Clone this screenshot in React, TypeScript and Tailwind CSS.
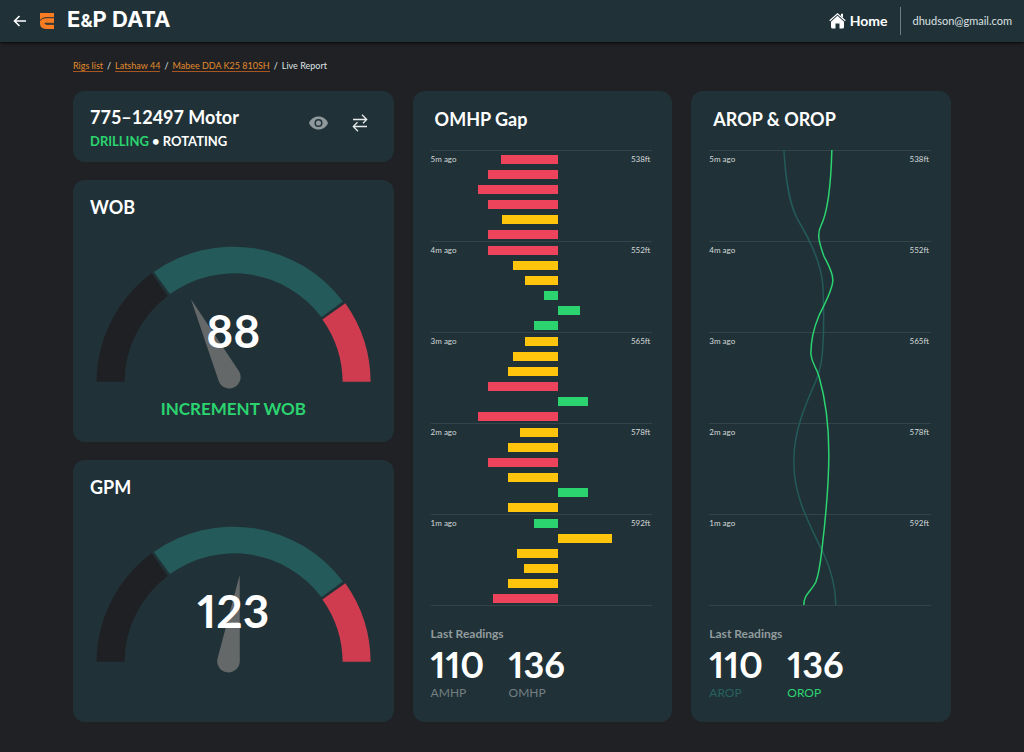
import React from "react";

type Needle = { x: number; y: number; angle: number };

const crumbs = ["Rigs list", "Latshaw 44", "Mabee DDA K25 810SH"];

// negative values grow to the left of the axis
const gapRows = [
  { time: "5m ago", depth: "538ft", values: [-58, -71, -81, -71, -57, -71] },
  { time: "4m ago", depth: "552ft", values: [-71, -45, -33, -14, 22, -24] },
  { time: "3m ago", depth: "565ft", values: [-33, -45, -51, -71, 30, -81] },
  { time: "2m ago", depth: "578ft", values: [-38, -51, -71, -51, 30, -51] },
  { time: "1m ago", depth: "592ft", values: [-24, 54, -41, -34, -51, -66] },
];

const CHART_WIDTH = 222;
const AXIS = 128;

const barColor = (value: number) => {
  if (value > 50) return "bg-[#ffc40c]";
  if (value > -25) return "bg-[#2bd46f]";
  if (value > -58) return "bg-[#ffc40c]";
  return "bg-[#ee445b]";
};

const Card: React.FC<{ className?: string; children: React.ReactNode }> = ({
  className = "",
  children,
}) => (
  <section className={`rounded-xl bg-[#203238] ${className}`}>{children}</section>
);

const Header: React.FC = () => (
  <header className="flex h-[42px] items-center justify-between bg-[#203238] pl-[13px] pr-3 shadow-sm shadow-black/60">
    <div className="flex items-center">
      <button type="button" aria-label="Back" className="mr-[13px]">
        <svg width="14" height="12" viewBox="0 0 14 12" fill="none" stroke="#fff" strokeWidth="1.6">
          <path d="M13 6H1.5M6.5 1L1.5 6l5 5" />
        </svg>
      </button>
      <svg width="15" height="16" viewBox="0 0 15 16" className="mr-3" aria-hidden="true">
        <path d="M0 0H14V16H6Q0 15.500 0 10.500V0Z" fill="#f97b22" />
        <path
          d="M0 7.500Q2 4.700 6 4.700H14M14 11.300H7Q5 11.300 5 10.300H14"
          fill="none"
          stroke="#203238"
          strokeWidth="1"
        />
      </svg>
      <h1 className="font-['Inter',sans-serif] text-[22px] font-bold leading-6 text-white">
        E<span className="text-lg">&amp;</span>P DATA
      </h1>
    </div>
    <div className="flex items-center">
      <a href="#home" className="flex items-center gap-1 text-sm font-bold text-white">
        <svg width="17" height="16" viewBox="0 0 17 16" fill="#fff" aria-hidden="true">
          <path d="M8.500 2.800L15 8.700V14q0 1.500-1.500 1.500H10.500V10.500h-4v5h-3Q2 15.500 2 14V8.700Z" />
          <path
            d="M0.700 7.800L8.500 0.900l7.800 6.900"
            fill="none"
            stroke="#fff"
            strokeWidth="1.2"
          />
          <path d="M12 0.800h2v4l-2-1.800Z" />
        </svg>
        Home
      </a>
      <span className="mx-3 h-7 w-px bg-[#6f7c80]" />
      <span className="text-[11px] text-[#dde1e2]">dhudson@gmail.com</span>
    </div>
  </header>
);

const Breadcrumbs: React.FC = () => (
  <nav aria-label="Breadcrumb" className="flex h-[49px] items-center gap-1 pb-[2px] text-[9px] leading-3 text-[#dfe3e4]">
    {crumbs.map((crumb) => (
      <React.Fragment key={crumb}>
        <a href="#crumb" className="border-b border-[#a8561f] leading-[11px] text-[#e08a2c]">
          {crumb}
        </a>
        <span>/</span>
      </React.Fragment>
    ))}
    <span>Live Report</span>
  </nav>
);

const MotorCard: React.FC = () => (
  <Card className="flex h-[71px] items-start justify-between pl-[17px] pr-[26px] pt-[14px]">
    <div>
      <h2 className="text-lg font-bold leading-6 text-white">775–12497 Motor</h2>
      <p className="text-[13px] font-bold leading-6 text-white">
        <span className="text-[#2bd46f]">DRILLING</span> • ROTATING
      </p>
    </div>
    <div className="flex h-9 items-center gap-6">
      <button type="button" aria-label="Toggle visibility">
        <svg width="19" height="14" viewBox="0 0 19 14">
          <path d="M9.500 0.500C5.200 0.500 1.600 3 0 7c1.600 4 5.200 6.500 9.500 6.500S17.400 11 19 7C17.400 3 13.800 0.500 9.500 0.500Z" fill="#8f999b" />
          <circle cx="9.500" cy="7" r="3.300" fill="#8f999b" stroke="#203238" strokeWidth="1.500" />
        </svg>
      </button>
      <button type="button" aria-label="Swap">
        <svg width="16" height="18" viewBox="0 0 16 18" fill="none" stroke="#e6eaea" strokeWidth="1.300">
          <path d="M1 5.500H14.500M10 0.800l4.700 4.700L11 9.200M15 12.500H1.500M5.500 8.300L1.300 12.500l4.700 4.700" />
        </svg>
      </button>
    </div>
  </Card>
);

const Gauge: React.FC<{ title: string; value: number; needle: Needle; hint?: string }> = ({
  title,
  value,
  needle,
  hint,
}) => (
  <Card className="h-[262px] px-[17px] pt-[13px]">
    <h2 className="text-lg font-bold leading-7 text-white">{title}</h2>
    <div className="relative mt-[19px]">
      <svg viewBox="0 0 287 155" className="block w-full" aria-hidden="true">
        <path d="M6.500 142A137.300 137.300 0 0 1 61.700 33.300L77.700 56A109.300 109.300 0 0 0 34.500 142Z" fill="#1f2024" />
        <path d="M64 32A137.300 137.300 0 0 1 253.300 61.700L231.700 77.300A109.300 109.300 0 0 0 80 54.200Z" fill="#245a59" />
        <path d="M255.700 63.300A137.300 137.300 0 0 1 281 142H253A109.300 109.300 0 0 0 232.700 79.700Z" fill="#cf3c4f" />
        <path
          d="M0 -87L11.200 -1.500A11.300 11.300 0 1 1 -11.200 -1.500Z"
          fill="#646869"
          transform={`translate(${needle.x} ${needle.y}) rotate(${needle.angle})`}
        />
      </svg>
      <p className="absolute inset-x-0 top-[63px] text-center text-[46px] font-bold leading-[56px] text-white proportional-nums">
        {value}
      </p>
    </div>
    {hint && (
      <p className="text-center text-[17px] font-bold leading-7 text-[#2bd46f]">{hint}</p>
    )}
  </Card>
);

const Timeline: React.FC<{ bars?: boolean; children?: React.ReactNode }> = ({
  bars = false,
  children,
}) => (
  <div className="relative border-b border-[#33454b]">
    {gapRows.map((row) => (
      <div key={row.time} className="grid h-[91px] border-t border-[#33454b] pt-px">
        <div className="col-start-1 row-start-1 flex justify-between pr-[2px] text-[8px] leading-[15px] text-[#d3d8d9]">
          <span>{row.time}</span>
          <span>{row.depth}</span>
        </div>
        {bars && (
          <div className="col-start-1 row-start-1">
            {row.values.map((value, i) => (
              <div key={i} className="flex h-[15px] items-center">
                <div
                  className={`h-[9px] ${barColor(value)}`}
                  style={{
                    marginLeft: `${((AXIS + Math.min(value, 0)) / CHART_WIDTH) * 100}%`,
                    width: `${(Math.abs(value) / CHART_WIDTH) * 100}%`,
                  }}
                />
              </div>
            ))}
          </div>
        )}
      </div>
    ))}
    {children}
  </div>
);

const Reading: React.FC<{ value: number; label: string; color: string }> = ({
  value,
  label,
  color,
}) => (
  <div className="w-[78px]">
    <p className="text-4xl font-bold leading-[42px] text-white proportional-nums">{value}</p>
    <p className={`text-xs leading-4 ${color}`}>{label}</p>
  </div>
);

const ChartCard: React.FC<{
  title: string;
  chart: React.ReactNode;
  readings: React.ReactNode;
}> = ({ title, chart, readings }) => (
  <Card className="pb-5 pl-[18px] pr-5 pt-[14px]">
    <h2 className="mb-[17px] pl-1 text-lg font-bold leading-7 text-white">{title}</h2>
    {chart}
    <h3 className="mt-[19px] text-xs font-bold leading-[18px] text-[#929b9d]">Last Readings</h3>
    <div className="flex">{readings}</div>
  </Card>
);

const App: React.FC = () => (
  <div className="min-h-screen bg-[#202124] font-['Lato',sans-serif]">
    <Header />
    <main className="px-[73px] pb-[30px]">
      <Breadcrumbs />
      <div className="grid grid-cols-[321fr_260fr_260fr] gap-x-[19px]">
        <div className="flex flex-col gap-[18px]">
          <MotorCard />
          <Gauge
            title="WOB"
            value={88}
            needle={{ x: 139.5, y: 137.3, angle: -26.2 }}
            hint="INCREMENT WOB"
          />
          <Gauge title="GPM" value={123} needle={{ x: 138.7, y: 141.3, angle: 7.4 }} />
        </div>
        <ChartCard
          title="OMHP Gap"
          chart={<Timeline bars />}
          readings={
            <>
              <Reading value={110} label="AMHP" color="text-[#747f82]" />
              <Reading value={136} label="OMHP" color="text-[#747f82]" />
            </>
          }
        />
        <ChartCard
          title="AROP & OROP"
          chart={
            <Timeline>
              <svg
                viewBox="0 0 222 455"
                preserveAspectRatio="none"
                className="absolute inset-0 h-full w-full"
                fill="none"
                strokeWidth="1.500"
                aria-hidden="true"
              >
                <path
                  d="M75 0C77 35 81 55 89 70C100 88 112 112 114 135C115 155 115 180 114 196C113 215 110 223 107 231C97 254 85 280 85 310C84 345 100 373 114 402C121 417 127 435 127 455"
                  stroke="#245a59"
                />
                <path
                  d="M123 0C122 40 118 64 112 76C108 84 110 92 115 106C120 116 124 122 124 130C124 140 115 155 110 166C104 180 102 190 102 204C103 214 107 216 110 226C117 250 120 280 120 304C120 340 116 375 113 400C111 418 110 424 107 432C102 442 95 444 95 455"
                  stroke="#2bd46f"
                />
              </svg>
            </Timeline>
          }
          readings={
            <>
              <Reading value={110} label="AROP" color="text-[#27615f]" />
              <Reading value={136} label="OROP" color="text-[#2bd46f]" />
            </>
          }
        />
      </div>
    </main>
  </div>
);

export default App;
